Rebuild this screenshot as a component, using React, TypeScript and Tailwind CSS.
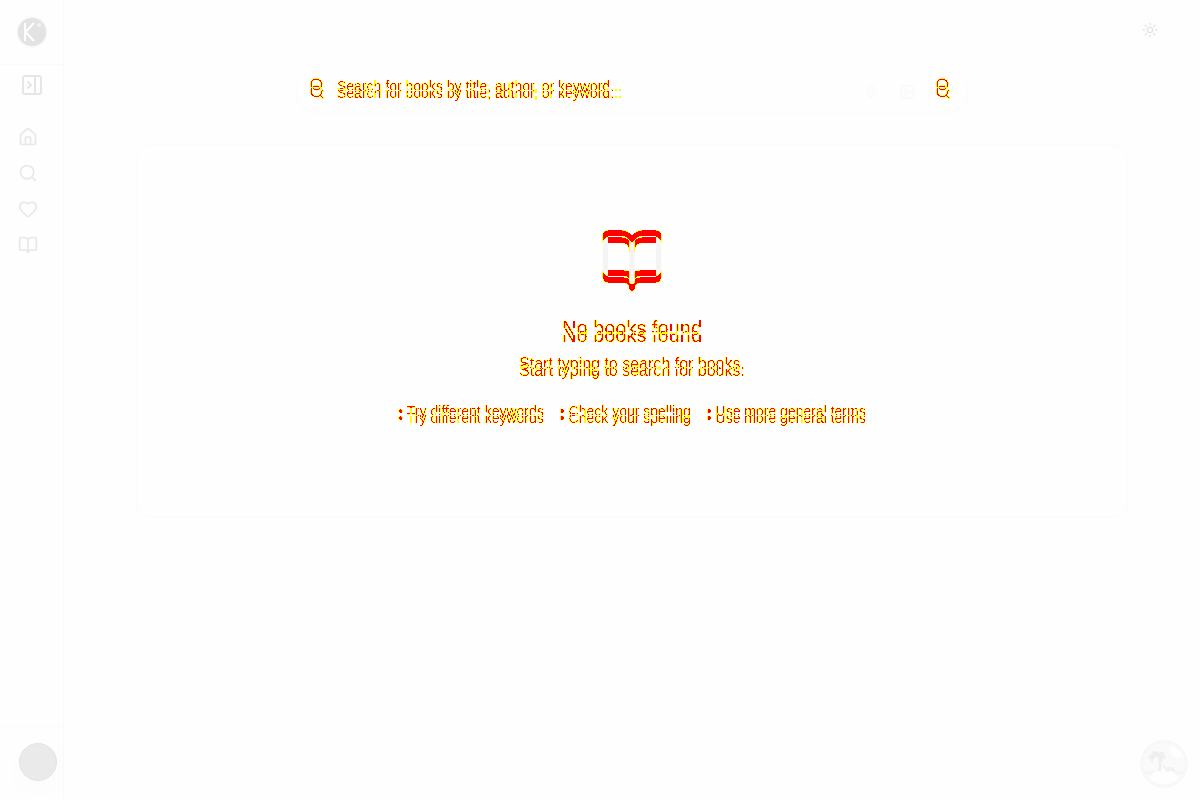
import { BookOpen, Heart, House, Image, Mic, PanelRightClose, Search, Sun } from "lucide-react";

const navItems = [
  { label: "Home", Icon: House },
  { label: "Search", Icon: Search },
  { label: "Favorites", Icon: Heart },
  { label: "Library", Icon: BookOpen },
];

const tips = ["Try different keywords", "Check your spelling", "Use more general terms"];

/* Echoes its source 7px higher: areas in one copy only turn red with a yellow
   fringe, areas shared by both copies stay pale grey. */
function DiffFilter() {
  return (
    <svg className="absolute size-0" aria-hidden="true">
      <filter id="diff" x="-5%" y="-60%" width="110%" height="220%" colorInterpolationFilters="sRGB">
        <feOffset in="SourceGraphic" dy="-7" result="moved" />
        <feComposite in="SourceGraphic" in2="moved" operator="arithmetic" k2="1" k3="-1" result="below" />
        <feComposite in="moved" in2="SourceGraphic" operator="arithmetic" k2="1" k3="-1" result="above" />
        <feComposite in="below" in2="above" operator="arithmetic" k2="1" k3="1" result="changed" />
        <feColorMatrix in="changed" values="0 0 0 0 1  0 0 0 1 0  0 0 0 0 0  0 0 0 1 0" />
        <feComponentTransfer result="marks">
          <feFuncG type="discrete" tableValues="1 1 1 1 1 1 1 0 0 0" />
          <feFuncA type="discrete" tableValues="0 1 1 1 1 1 1 1 1 1" />
        </feComponentTransfer>
        <feComposite in="SourceGraphic" in2="moved" operator="in" />
        <feColorMatrix values="0 0 0 0 0  0 0 0 0 0  0 0 0 0 0  0 0 0 0.04 0" result="shared" />
        <feMerge>
          <feMergeNode in="shared" />
          <feMergeNode in="marks" />
        </feMerge>
      </filter>
    </svg>
  );
}

function Logo() {
  return (
    <svg viewBox="0 0 32 32" className="size-8" role="img" aria-label="K">
      <circle cx="16" cy="16" r="15.5" fill="#f7f7f7" />
      <circle cx="16" cy="16" r="14" fill="#e3e3e3" />
      <path d="M9 7v18M18 7l-8.500 9 8.500 9" fill="none" stroke="#fff" strokeWidth="2" />
      <circle cx="23" cy="9" r="2" fill="#f3f3f3" />
    </svg>
  );
}

function Island() {
  return (
    <svg viewBox="0 0 48 48" className="size-12" aria-hidden="true">
      <circle cx="24" cy="24" r="24" fill="#f8f8f8" />
      <circle cx="24" cy="24" r="21" fill="#fafafa" />
      <path d="M32 6a7 7 0 0 0 11 9a21 21 0 0 0-11-9z" fill="#fefefe" />
      <path d="M31 8l-2 2M32 12l-2 1M34 15l-1 2M38 17v2" stroke="#fefefe" strokeWidth="1.500" />
      <path d="M4 32h40M5 34h38" stroke="#f2f2f2" strokeWidth="1" />
      <path d="M9 38c4-6 9-9 15-9s11 3 15 9a21 21 0 0 1-30 0z" fill="#fefefe" />
      <path d="M20 17c2 5 2 9 1 14h-3c1-5 1-9 0-14z" fill="#efefef" />
      <path d="M19 17c-3-1-6 1-6 6-2-1-3-3-2-5l-3 1c0-3 2-5 5-5l-2-2c3-1 6-1 8 1 2-2 5-1 7 1h-3c2 1 3 3 3 6l-3-2c0 2 0 3-1 4-1-3-3-5-5-5z" fill="#efefef" />
      <path d="M24 25l2 5h9M27 28h7M28 30v2M34 30v2" fill="none" stroke="#f1f1f1" strokeWidth="1.500" />
    </svg>
  );
}

export default function App() {
  return (
    <div className="flex min-h-screen bg-[#fefefe] font-['Liberation_Sans',sans-serif] text-black">
      <DiffFilter />
      <aside className="flex w-16 shrink-0 flex-col border-r border-[#fafafa]">
        <div className="flex h-[65px] items-center border-b border-[#fafafa] px-4">
          <a href="#home">
            <Logo />
          </a>
        </div>
        <button type="button" aria-label="Expand sidebar" className="mt-2 self-center text-[#e6e6e6]">
          <PanelRightClose size={24} />
        </button>
        <nav className="mt-[30px] flex flex-col gap-4 pl-[18px] text-[#e8e8e8]">
          {navItems.map(({ label, Icon }) => (
            <a key={label} href={"#" + label.toLowerCase()} aria-label={label} className="w-5">
              <Icon size={20} />
            </a>
          ))}
        </nav>
        <div className="mt-auto border-t border-[#fafafa] pt-4 pb-[19px] pl-[19px]">
          <button
            type="button"
            aria-label="Account"
            className="block size-[38px] rounded-full border border-[#e4e4e4] bg-[#eaeaea] shadow-[0_8px_30px_rgba(0,0,0,0.02)]"
          />
        </div>
      </aside>

      <main className="flex min-w-0 flex-1 flex-col">
        <header className="flex h-[60px] items-center justify-end pr-[42px]">
          <button type="button" aria-label="Toggle theme" className="text-[#e4e4e4]">
            <Sun size={16} />
          </button>
        </header>

        <div className="px-[72px] pt-3">
          <form
            role="search"
            className="mx-auto flex h-10 max-w-2xl items-center rounded-full border border-[#fcfcfc] pr-2 pl-3 shadow-[0_1px_5px_rgba(0,0,0,0.015)]"
          >
            <Search size={16} className="shrink-0 [filter:url(#diff)]" />
            <input
              type="text"
              aria-label="Search for books"
              placeholder="Search for books by title, author, or keyword..."
              className="ml-3 h-6 min-w-0 flex-1 pt-0.5 text-sm outline-none [filter:url(#diff)] placeholder:text-black"
            />
            <div className="flex gap-1 text-[#f9f9f9]">
              <button type="button" aria-label="Voice search" className="flex size-8 items-center justify-center">
                <Mic size={16} />
              </button>
              <button type="button" aria-label="Image search" className="flex size-8 items-center justify-center">
                <Image size={16} />
              </button>
              <button type="button" aria-label="Search" className="flex size-8 items-center justify-center text-black">
                <Search size={16} className="[filter:url(#diff)]" />
              </button>
            </div>
          </form>

          <section className="mt-8 flex flex-col items-center rounded-2xl border-2 border-[#fcfcfc] px-6 pt-[86px] pb-[88px] text-center">
            <BookOpen size={64} className="[filter:url(#diff)]" />
            <h1 className="mt-6 text-xl leading-[30px] [filter:url(#diff)]">No books found</h1>
            <p className="mt-2 text-base leading-[26px] [filter:url(#diff)]">Start typing to search for books.</p>
            <ul className="mt-6 flex flex-wrap justify-center gap-x-4 text-sm [filter:url(#diff)]">
              {tips.map((tip) => (
                <li key={tip}>• {tip}</li>
              ))}
            </ul>
          </section>
        </div>
      </main>

      <button type="button" aria-label="Open scene" className="fixed right-3 bottom-3 rounded-full">
        <Island />
      </button>
    </div>
  );
}
